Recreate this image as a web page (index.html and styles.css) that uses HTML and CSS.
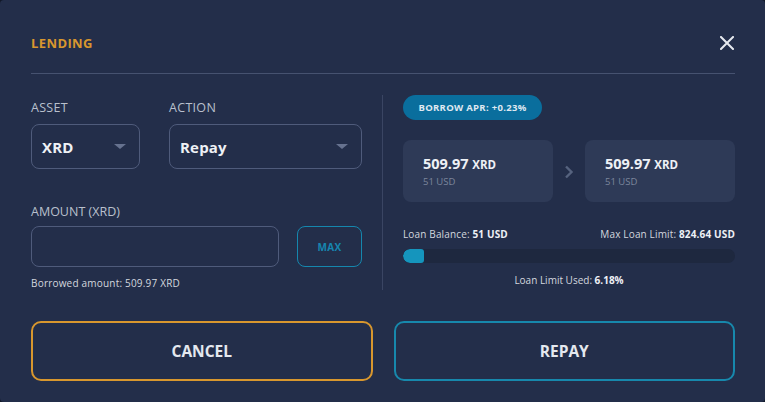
FILE: index.html
```html
<!DOCTYPE html>
<html lang="en">
<head>
<meta charset="utf-8">
<title>Lending</title>
<link rel="stylesheet" href="styles.css">
</head>
<body>
<div class="modal">
  <header class="modal-header">
    <h1 class="title">LENDING</h1>
    <button class="close" aria-label="Close">
      <svg width="14" height="14" viewBox="0 0 14 14"><path d="M1 1 L13 13 M13 1 L1 13" stroke="#e6e9ef" stroke-width="2" stroke-linecap="square" fill="none"/></svg>
    </button>
  </header>

  <div class="content">
    <section class="left">
      <div class="row-selects">
        <div class="field field-asset">
          <label class="label">ASSET</label>
          <div class="select">
            <span>XRD</span>
            <span class="caret"></span>
          </div>
        </div>
        <div class="field field-action">
          <label class="label">ACTION</label>
          <div class="select">
            <span>Repay</span>
            <span class="caret"></span>
          </div>
        </div>
      </div>
      <label class="label label-amount">AMOUNT (XRD)</label>
      <div class="row-amount">
        <div class="input"></div>
        <button class="max">MAX</button>
      </div>
      <p class="hint">Borrowed amount: 509.97 XRD</p>
    </section>

    <div class="vdivider"></div>

    <section class="right">
      <div class="pill">BORROW APR: +0.23%</div>
      <div class="cards">
        <div class="card">
          <div class="amt">509.97 <span class="unit">XRD</span></div>
          <div class="usd">51 USD</div>
        </div>
        <svg class="chev" width="10" height="14" viewBox="0 0 10 14"><path d="M2 1.5 L7.5 7 L2 12.5" stroke="#56637f" stroke-width="2.4" fill="none"/></svg>
        <div class="card">
          <div class="amt">509.97 <span class="unit">XRD</span></div>
          <div class="usd">51 USD</div>
        </div>
      </div>
      <div class="loan-row">
        <span>Loan Balance: <b>51 USD</b></span>
        <span>Max Loan Limit: <b>824.64 USD</b></span>
      </div>
      <div class="bar"><div class="fill" style="width:6.18%"></div></div>
      <p class="used">Loan Limit Used: <b>6.18%</b></p>
    </section>
  </div>

  <div class="actions">
    <button class="btn btn-cancel">CANCEL</button>
    <button class="btn btn-repay">REPAY</button>
  </div>
</div>
</body>
</html>
```

FILE: styles.css
```css
* { box-sizing: border-box; }
html, body {
  margin: 0;
  padding: 0;
  background: #111827;
}
body {
  font-family: "Open Sans", "Liberation Sans", sans-serif;
  color: #e4e8ef;
}
.modal {
  width: 765px;
  height: 402px;
  background: #232e4a;
  border-radius: 4px;
  padding: 0 30px 0 31px;
  overflow: hidden;
}
.modal-header {
  height: 74px;
  padding-top: 13px;
  display: flex;
  align-items: center;
  justify-content: space-between;
  border-bottom: 1px solid #465270;
}
.title {
  margin: 0;
  font-size: 13px;
  font-weight: 700;
  color: #d8972e;
  letter-spacing: 0.4px;
}
.close {
  background: none;
  border: 0;
  padding: 0;
  margin-right: 1px;
  width: 14px;
  height: 14px;
  display: flex;
}
.content {
  display: grid;
  grid-template-columns: 331px 1px 332px;
  column-gap: 20px;
  margin-top: 21px;
  height: 195px;
}
.vdivider {
  background: #3a4563;
}
.left {
  padding-top: 5px;
}
.row-selects {
  display: flex;
  gap: 29px;
}
.field-asset { width: 109px; }
.field-action { width: 193px; }
.label {
  display: block;
  font-size: 12.5px;
  line-height: 16px;
  color: #b9c0cd;
  letter-spacing: 0.3px;
}
.select {
  margin-top: 8px;
  height: 45px;
  border: 1px solid #4f5b7b;
  border-radius: 8px;
  display: flex;
  align-items: center;
  justify-content: space-between;
  padding: 0 13px 0 10px;
  font-size: 15px;
  font-weight: 700;
  color: #eef1f6;
  letter-spacing: 0.2px;
}
.caret {
  width: 0;
  height: 0;
  border-left: 6px solid transparent;
  border-right: 6px solid transparent;
  border-top: 5px solid #66728f;
}
.label-amount {
  margin-top: 35px;
  letter-spacing: 0;
}
.row-amount {
  margin-top: 6px;
  display: flex;
  gap: 18px;
}
.input {
  width: 248px;
  height: 41px;
  border: 1px solid #4f5b7b;
  border-radius: 8px;
}
.max {
  width: 65px;
  height: 41px;
  border: 1px solid #1587ae;
  border-radius: 8px;
  background: none;
  color: #1686b0;
  font-family: inherit;
  font-weight: 700;
  font-size: 10px;
  letter-spacing: 0.4px;
  padding: 0;
}
.hint {
  margin: 9px 0 0;
  font-size: 10px;
  line-height: 14px;
  letter-spacing: 0.2px;
  color: #d3d7df;
}
.right {
  display: flex;
  flex-direction: column;
  align-items: stretch;
}
.pill {
  align-self: flex-start;
  height: 25px;
  width: 139px;
  border-radius: 13px;
  background: #0a6e9d;
  color: #dfe8f1;
  font-size: 9.5px;
  font-weight: 700;
  letter-spacing: 0.3px;
  display: flex;
  align-items: center;
  justify-content: center;
}
.cards {
  margin-top: 20px;
  display: flex;
  align-items: center;
  justify-content: space-between;
}
.card {
  width: 150px;
  height: 62px;
  background: #2e3a57;
  border-radius: 8px;
  padding: 16px 20px 0;
}
.chev { margin-top: 2px; }
.amt {
  font-size: 14.5px;
  font-weight: 700;
  line-height: 16px;
  color: #eef1f6;
}
.unit { font-size: 11.5px; }
.usd {
  margin-top: 3px;
  font-size: 9.5px;
  line-height: 12px;
  color: #7c869c;
}
.loan-row {
  margin-top: 26px;
  display: flex;
  justify-content: space-between;
  font-size: 10px;
  line-height: 12px;
  letter-spacing: 0.15px;
  color: #d3d7df;
}
.loan-row b, .used b { color: #eef1f6; }
.bar {
  margin-top: 9px;
  height: 14px;
  border-radius: 7px;
  background: #1e283f;
  overflow: hidden;
}
.fill {
  height: 100%;
  background: #1595bd;
  border-radius: 7px 3px 3px 7px;
}
.used {
  margin: 11px 0 0;
  text-align: center;
  font-size: 10px;
  line-height: 12px;
  color: #d3d7df;
}
.actions {
  margin-top: 31px;
  display: flex;
  gap: 21px;
}
.btn {
  flex: 1;
  height: 60px;
  border-radius: 10px;
  background: none;
  font-family: inherit;
  font-size: 15.5px;
  font-weight: 700;
  color: #e4e8ef;
}
.btn-cancel { border: 2px solid #d8972e; }
.btn-repay { border: 2px solid #1788ac; }
```
